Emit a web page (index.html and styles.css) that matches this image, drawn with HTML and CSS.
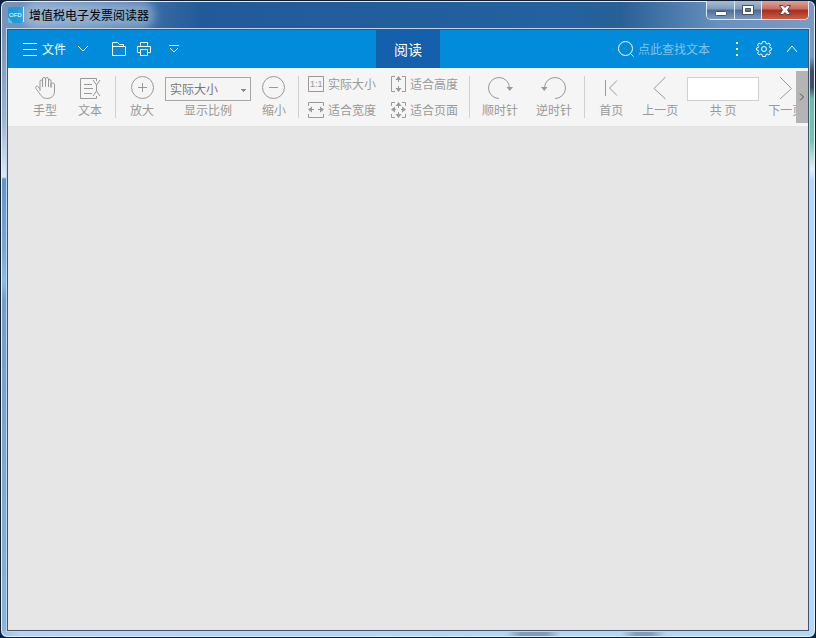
FILE: index.html
```html
<!DOCTYPE html>
<html lang="zh-CN">
<head>
  <meta charset="UTF-8" />
  <meta name="viewport" content="width=device-width, initial-scale=1.0"/>
  <title>增值税电子发票阅读器</title>
  <link rel="stylesheet" href="styles.css">
</head>
<body>

  <div class="window">

    <div class="titlebar">
      <svg class="app-icon" width="16" height="16" viewBox="0 0 16 16">
        <path d="M1 0H15V16H4L0 12V1Z" fill="#1e9bd7"/>
        <path d="M0 10L5 16H2Q0 16 0 14Z" fill="#5cc4ee"/>
        <path d="M15.500 0V15" stroke="#e8f6ff"/>
        <text class="logo-text" x="1" y="10">OFD</text>
      </svg>
      <span class="title">增值税电子发票阅读器</span>
      <div class="caption">
        <button class="min" aria-label="最小化">
          <svg width="14" height="12" viewBox="0 0 14 12"><rect x="1.500" y="7.500" width="11" height="4" rx="1" fill="#fff" stroke="#46506a"/></svg>
        </button>
        <button class="max" aria-label="最大化">
          <svg width="14" height="12" viewBox="0 0 14 12"><path d="M1.500 1.500H12.500V10.500H1.500ZM4.500 4.500V7.500H9.500V4.500Z" fill="#fff" fill-rule="evenodd" stroke="#46506a"/></svg>
        </button>
        <button class="close" aria-label="关闭">
          <svg width="14" height="12" viewBox="0 0 14 12"><path d="M1.500 1.500H5L7 3.500L9 1.500H12.500L9.500 6L12.500 10.500H9L7 8.500L5 10.500H1.500L4.500 6Z" fill="#fff" stroke="#5a4048"/></svg>
        </button>
      </div>
    </div>

    <div class="client">

      <header class="menubar">
        <div class="menu-left">
          <button class="file">
            <svg width="14" height="14" viewBox="0 0 14 14"><path d="M0 1.500H14M0 7.500H14M0 13.500H14"/></svg>
            文件
            <svg class="arrow" width="12" height="8" viewBox="0 0 12 8"><path d="M1 1L6 6L11 1"/></svg>
          </button>
          <button class="open" aria-label="打开">
            <svg width="14" height="14" viewBox="0 0 14 14"><path d="M0.500 13.500V0.500H5.500L7.500 2.500H11.500V4.500M0.500 4.500H13.500V13.500H0.500"/></svg>
          </button>
          <button class="print" aria-label="打印">
            <svg width="14" height="14" viewBox="0 0 14 14"><path d="M3.500 4V0.500H10.500V4M3.500 10.500H0.500V4.500H13.500V10.500H10.500M3.500 7.500H10.500V13.500H3.500Z"/></svg>
          </button>
          <button class="more" aria-label="更多">
            <svg width="10" height="8" viewBox="0 0 10 8"><path d="M0 0.500H10M1 3L5 7L9 3"/></svg>
          </button>
        </div>

        <button class="tab">阅读</button>

        <div class="menu-right">
          <label class="search">
            <svg width="16" height="16" viewBox="0 0 16 16"><circle cx="7.500" cy="7.500" r="7"/><path d="M12 12L15.500 15.500"/></svg>
            <input type="text" aria-label="查找文本" placeholder="点此查找文本" />
          </label>
          <button class="dots" aria-label="选项">
            <svg width="2" height="14" viewBox="0 0 2 14"><path d="M1 0V2M1 6V8M1 12V14" stroke-width="2"/></svg>
          </button>
          <button class="settings" aria-label="设置">
            <svg width="16" height="16" viewBox="0 0 16 16">
              <path d="M6.500 0.500H9.500L10 2.500L11.200 3L13 2L14.500 4L13.300 5.500L13.700 6.500L15.500 7V9L13.700 9.500L13.300 10.500L14.500 12L13 14L11.200 13L10 13.500L9.500 15.500H6.500L6 13.500L4.800 13L3 14L1.500 12L2.700 10.500L2.300 9.500L0.500 9V7L2.300 6.500L2.700 5.500L1.500 4L3 2L4.800 3L6 2.500Z"/>
              <circle cx="8" cy="8" r="2.500"/>
            </svg>
          </button>
          <button class="collapse" aria-label="收起">
            <svg width="12" height="8" viewBox="0 0 12 8"><path d="M1 7L6 1L11 7"/></svg>
          </button>
        </div>
      </header>

      <div class="toolbar">
        <div class="tools">

          <div class="group mode">
            <button class="tool">
              <svg width="22" height="24" viewBox="0 0 22 24"><path d="M6 15V5.500Q6 4 7.200 4T8.500 5.500V11M8.500 11V3Q8.500 1.500 10 1.500T11.500 3V10.500M11.500 10.500V3Q11.500 1.500 12.900 1.500T14.500 3V11M14.500 11V5Q14.500 3.500 15.800 3.500T17 5V11.500M17 11.500V8.500Q17.200 7 18.800 7Q20.500 7 20.500 8.500V15Q20.500 22.500 12.500 22.500Q9 22.500 7 19.500L2 12.500Q1 11 2.300 10.300Q3.500 9.800 4.500 11L6 13"/></svg>
              <span>手型</span>
            </button>
            <button class="tool">
              <svg width="22" height="24" viewBox="0 0 22 24"><path d="M17.500 5V2.500H1.500V22.500H17.500V20M5 8.500H13M5 12.500H14M5 17.500H13M14 4L17.500 9L21 4M17.500 9V15M14 20L17.500 15L21 20"/></svg>
              <span>文本</span>
            </button>
          </div>

          <div class="group zoom">
            <button class="tool">
              <svg width="24" height="24" viewBox="0 0 24 24"><circle cx="12.500" cy="11.500" r="11"/><path d="M8 11.500H17M12.500 7V16"/></svg>
              <span>放大</span>
            </button>
            <div class="tool">
              <select id="scale">
                <option>实际大小</option>
                <option>适合宽度</option>
                <option>适合页面</option>
              </select>
              <label for="scale">显示比例</label>
            </div>
            <button class="tool">
              <svg width="24" height="24" viewBox="0 0 24 24"><circle cx="11.500" cy="11.500" r="11"/><path d="M7 11.500H16"/></svg>
              <span>缩小</span>
            </button>
          </div>

          <div class="group fit">
            <button>
              <svg width="16" height="16" viewBox="0 0 16 16"><path d="M0.500 0.500H15.500V15.500H0.500Z"/><text class="ratio" x="2" y="11">1:1</text></svg>
              实际大小
            </button>
            <button>
              <svg width="15" height="16" viewBox="0 0 15 16"><path d="M4 0.500H0.500V15.500H4M11 0.500H14.500V15.500H11M7.500 2V6M7.500 10V14"/><path class="solid" d="M7.500 0L10.500 4H4.500ZM7.500 16L10.500 12H4.500Z"/></svg>
              适合高度
            </button>
            <button>
              <svg width="16" height="16" viewBox="0 0 16 16"><path d="M0.500 4V0.500H15.500V4M0.500 12V15.500H15.500V12M2 7.500H6M10 7.500H14"/><path class="solid" d="M0 7.500L4 4.500V10.500ZM16 7.500L12 4.500V10.500Z"/></svg>
              适合宽度
            </button>
            <button>
              <svg width="15" height="16" viewBox="0 0 15 16"><path d="M4 0.500H0.500V4M11 0.500H14.500V4M0.500 12V15.500H4M14.500 12V15.500H11M7.500 2V6M7.500 10V14M2 7.500H5M10 7.500H13"/><path class="solid" d="M7.500 0L10.500 4H4.500ZM7.500 16L10.500 12H4.500ZM0 7.500L4 4.500V10.500ZM15 7.500L11 4.500V10.500Z"/></svg>
              适合页面
            </button>
          </div>

          <div class="group rotate">
            <button class="tool">
              <svg width="26" height="24" viewBox="0 0 26 24"><path d="M12 22.500A10.500 10.500 0 1 1 22.500 12"/><path class="solid" d="M19.500 11H26L22.800 15Z"/></svg>
              <span>顺时针</span>
            </button>
            <button class="tool">
              <svg width="26" height="24" viewBox="0 0 26 24"><path d="M14 22.500A10.500 10.500 0 1 0 3.500 12"/><path class="solid" d="M0 11H6.500L3.200 15Z"/></svg>
              <span>逆时针</span>
            </button>
          </div>

          <div class="group pages">
            <button class="tool first">
              <svg width="14" height="24" viewBox="0 0 14 24"><path d="M1.500 4V20M13 4.500L5.500 12L13 19.500"/></svg>
              <span>首页</span>
            </button>
            <button class="tool">
              <svg width="14" height="24" viewBox="0 0 14 24"><path d="M12.500 1L1 12.500L12.500 23"/></svg>
              <span>上一页</span>
            </button>
            <div class="tool">
              <input type="text" id="page" />
              <label for="page">共 页</label>
            </div>
            <button class="tool">
              <svg width="14" height="24" viewBox="0 0 14 24"><path d="M1 1L12.500 12.500L1 23"/></svg>
              <span>下一页</span>
            </button>
          </div>

        </div>
        <button class="scroll" aria-label="向右滚动">
          <svg width="6" height="8" viewBox="0 0 6 8"><path d="M1 0.500L4.500 4L1 7.500"/></svg>
        </button>
      </div>

      <main class="page"></main>

    </div>
  </div>

</body>
</html>
```

FILE: styles.css
```css
* {
  box-sizing: border-box;
}

body {
  margin: 0;
  background: #0a2240;
  font-family: "Noto Sans CJK SC", sans-serif;
  font-size: 12px;
  line-height: 16px;
}

button {
  display: flex;
  align-items: center;
  justify-content: center;
  padding: 0;
  border: none;
  background: none;
  color: inherit;
  font: inherit;
  white-space: nowrap;
  cursor: pointer;
}

svg {
  display: block;
  flex: none;
  fill: none;
}

input, select {
  font: inherit;
  border-radius: 0;
}

/* window frame */
.window {
  display: flex;
  flex-direction: column;
  min-height: 100vh;
  padding: 0 6px 6px;
  border: 1px solid #101c30;
  border-radius: 7px;
  box-shadow: inset 0 0 0 1px #e4effa;
  background:
    linear-gradient(90deg, #7895bb, #5d86b6 80px, #225a99 200px, #23619f 560px, #286096 620px, #6991bd 720px, #7a9bc4) top / 100% 29px no-repeat,
    linear-gradient(90deg, #9dbbe0, #b3d3fb 20px, #b3d6fb 505px, #7f9cba 520px, #7f9cba 545px, #b3d6fb 560px, #b3d6fb 620px, #7f9cba 635px, #7f9cba 650px, #b3d6fb 665px) bottom / 100% 6px no-repeat,
    linear-gradient(#7593b9 29px, #a0b5d0 120px, #dfe8f2 176px, #5f95cb 178px, #76a9d8 250px, #86bdeb 280px, #719dc8 300px, #8ab4d8) left / 50% 100% no-repeat,
    linear-gradient(#7a9bc4 56px, #3f4e62 70px, #3f4e62 86px, #6dbca8 98px, #7ac3ae 140px, #e1f1f3 168px, #b3d6fb 180px) right / 50% 100% no-repeat;
}

.titlebar {
  display: flex;
  align-items: center;
  height: 28px;
}

.app-icon {
  margin-left: 1px;
}

.logo-text {
  fill: #fff;
  font: 6px "Liberation Sans", sans-serif;
}

.title {
  margin-left: 5px;
  color: #000;
  background: rgba(220, 232, 245, 0.4);
  box-shadow: 0 0 8px 6px rgba(220, 232, 245, 0.4);
  border-radius: 8px;
}

.caption {
  display: flex;
  align-self: flex-start;
  margin-left: auto;
  border: 1px solid #dce8f5;
  border-top: none;
  border-radius: 0 0 5px 5px;
  overflow: hidden;
}

.caption button {
  height: 18px;
  background: linear-gradient(#a9bdd4, #8099b9 45%, #4c6c96 50%, #7c9bc1);
}

.caption .min {
  width: 27px;
}

.caption .max {
  width: 27px;
  border-left: 1px solid #dce8f5;
}

.caption .close {
  width: 47px;
  border-left: 1px solid #dce8f5;
  background: linear-gradient(#dea398, #c86b5a 45%, #a92d1c 50%, #c95d45);
}

.client {
  display: flex;
  flex: 1;
  flex-direction: column;
  border: 1px solid #40546c;
  box-shadow: 0 0 0 1px #c0d6e8;
}

/* blue menu bar */
.menubar {
  display: grid;
  grid-template-columns: 1fr 64px 1fr;
  height: 38px;
  background: #028adb;
  color: #fff;
}

.menubar svg {
  stroke: #fff;
}

.menu-left, .menu-right {
  display: flex;
  align-items: center;
}

.menu-left {
  padding-left: 15px;
}

.menu-right {
  justify-content: flex-end;
  padding-right: 10px;
}

.file {
  gap: 5px;
}

.file .arrow {
  margin-left: 6px;
}

.open {
  margin-left: 23px;
}

.print {
  margin-left: 11px;
}

.more {
  margin-left: 18px;
}

.tab {
  background: #1460ac;
  font-size: 14px;
}

.search {
  display: flex;
  align-items: center;
  gap: 4px;
}

.search input {
  width: 90px;
  padding: 0;
  border: none;
  outline: none;
  background: none;
  color: #fff;
}

.search input::placeholder {
  color: #80c4ed;
  opacity: 1;
}

.dots {
  margin-left: 8px;
}

.settings {
  margin-left: 18px;
}

.collapse {
  margin-left: 14px;
}

/* tool bar */
.toolbar {
  display: flex;
  height: 58px;
  background: #f5f5f5;
  color: #999;
}

.toolbar svg {
  stroke: #999;
}

.tools {
  display: flex;
  flex: 1;
  min-width: 0;
  padding: 8px 0;
  overflow: hidden;
}

.group {
  display: flex;
  flex: none;
  height: 42px;
  border-right: 1px solid #d0d0d0;
}

.mode {
  gap: 21px;
  padding: 0 13px 0 25px;
}

.zoom {
  gap: 11px;
  padding: 0 12px 0 14px;
}

.fit {
  display: grid;
  grid-template-columns: auto auto;
  gap: 10px 15px;
  padding: 0 11px 0 9px;
}

.fit button {
  gap: 4px;
  height: 16px;
}

.fit .ratio {
  fill: #999;
  stroke: none;
  font: 9px "Liberation Sans", sans-serif;
}

.rotate {
  gap: 18px;
  padding: 0 12px;
}

.pages {
  gap: 9px;
  padding-left: 14px;
  border-right: none;
}

.first {
  margin-right: 10px;
}

.tool {
  display: flex;
  flex-direction: column;
  align-items: center;
  justify-content: flex-start;
  gap: 2px;
  height: 42px;
}

.toolbar .solid {
  fill: #999;
  stroke: none;
}

.tool select {
  width: 86px;
  height: 24px;
  padding: 0 4px;
  appearance: none;
  border: 1px solid #a6a6a6;
  background: linear-gradient(#888, #888) right 4px top 11px / 5px 1px no-repeat,
    linear-gradient(#888, #888) right 5px top 12px / 3px 1px no-repeat,
    linear-gradient(#888, #888) right 6px top 13px / 1px 1px no-repeat,
    #f5f5f5;
  color: #777;
}

.tool input {
  width: 72px;
  height: 24px;
  border: 1px solid #d0d0d0;
  background: #fff;
}

.tool select, .tool input {
  margin: 1px 0 -1px;
}

.scroll {
  width: 12px;
  margin: 3px 0;
  background: #b4b4b4;
}

.scroll svg {
  stroke: #555;
}

.page {
  flex: 1;
  background: #e6e6e6;
}
```
